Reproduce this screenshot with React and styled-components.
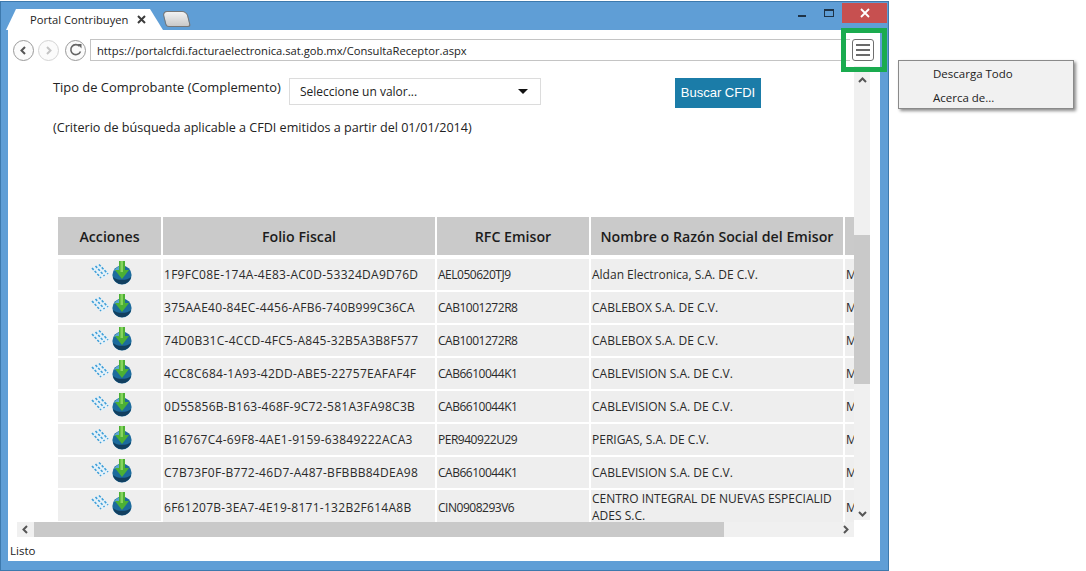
import React from "react";
import styled, { createGlobalStyle } from "styled-components";

const rows = [
  ["1F9FC08E-174A-4E83-AC0D-53324DA9D76D", "AEL050620TJ9", "Aldan Electronica, S.A. DE C.V."],
  ["375AAE40-84EC-4456-AFB6-740B999C36CA", "CAB1001272R8", "CABLEBOX S.A. DE C.V."],
  ["74D0B31C-4CCD-4FC5-A845-32B5A3B8F577", "CAB1001272R8", "CABLEBOX S.A. DE C.V."],
  ["4CC8C684-1A93-42DD-ABE5-22757EAFAF4F", "CAB6610044K1", "CABLEVISION S.A. DE C.V."],
  ["0D55856B-B163-468F-9C72-581A3FA98C3B", "CAB6610044K1", "CABLEVISION S.A. DE C.V."],
  ["B16767C4-69F8-4AE1-9159-63849222ACA3", "PER940922U29", "PERIGAS, S.A. DE C.V."],
  ["C7B73F0F-B772-46D7-A487-BFBBB84DEA98", "CAB6610044K1", "CABLEVISION S.A. DE C.V."],
  ["6F61207B-3EA7-4E19-8171-132B2F614A8B", "CIN0908293V6", "CENTRO INTEGRAL DE NUEVAS ESPECIALIDADES S.C."],
];

const ViewGlyph = styled.svg`
  margin-bottom: 2px;
  flex-shrink: 0;
`;

const ViewIcon = () => (
  <ViewGlyph width="22" height="20" viewBox="0 0 22 20">
    <path d="M2 7 L9 2 L21 11 L14 17 Z" fill="#e6f1f8" />
    <g stroke="#3f9fd8" strokeWidth="1.6" strokeDasharray="2.5 1.5" fill="none">
      <path d="M3 6 L12 16" />
      <path d="M6.5 4 L15.5 14" />
      <path d="M10 2.5 L19 12" />
    </g>
  </ViewGlyph>
);

const DownloadIcon = () => (
  <svg width="22" height="26" viewBox="0 0 22 26">
    <circle cx="11" cy="15" r="9.6" fill="#1c6b9c" />
    <path d="M1.8 17 A9.5 9.5 0 0 0 20.2 17 A12 8 0 0 1 1.8 17 Z" fill="#123f5f" />
    <path d="M3 11 A9 9 0 0 1 8 6.2 L8 10 Z" fill="#5aa6d0" />
    <path d="M8 1 H14 V10 H18 L11 19 L4 10 H8 Z" fill="#4cb034" />
    <path d="M9.5 1 H12 V12 H9.5 Z" fill="#86d45e" />
  </svg>
);

const Chevron = ({ dir, color = "#555" }) => {
  const d = {
    up: "M2 7 L5.5 3.5 L9 7",
    down: "M2 4 L5.5 7.5 L9 4",
    left: "M7 2 L3.5 5.5 L7 9",
    right: "M4 2 L7.5 5.5 L4 9",
  }[dir];
  return (
    <svg width="11" height="11" viewBox="0 0 11 11">
      <path d={d} fill="none" stroke={color} strokeWidth="2" />
    </svg>
  );
};

export default function App() {
  return (
    <Screen>
      <GlobalStyle />
      <Window>
        <TitleBar>
          <Tab>
            <TabTitle>Portal Contribuyen</TabTitle>
            <TabClose width="9" height="9" viewBox="0 0 9 9">
              <path d="M1 1 L8 8 M8 1 L1 8" stroke="#3c3c3c" strokeWidth="2" />
            </TabClose>
          </Tab>
          <NewTab />
          <WindowControls>
            <Minimize />
            <Maximize />
            <CloseButton>
              <svg width="10" height="10" viewBox="0 0 10 10">
                <path d="M1 1 L9 9 M9 1 L1 9" stroke="#fff" strokeWidth="1.8" />
              </svg>
            </CloseButton>
          </WindowControls>
        </TitleBar>
        <Client>
          <Toolbar>
            <NavButton>
              <Chevron dir="left" />
            </NavButton>
            <NavButton disabled>
              <Chevron dir="right" color="#c4c4c4" />
            </NavButton>
            <ReloadButton>
              <svg width="14" height="14" viewBox="0 0 14 14">
                <path d="M11.5 8.5 A5 5 0 1 1 10.5 3.2" fill="none" stroke="#666" strokeWidth="1.6" />
                <path d="M8.5 1 L12.5 1 L12.5 5.5 Z" fill="#666" />
              </svg>
            </ReloadButton>
            <Address>https://portalcfdi.facturaelectronica.sat.gob.mx/ConsultaReceptor.aspx</Address>
            <MenuButton>
              <MenuLine />
              <MenuLine />
              <MenuLine />
            </MenuButton>
          </Toolbar>
          <Body>
            <PageColumn>
              <Page>
                <FormRow>
                  <FormLabel>Tipo de Comprobante (Complemento)</FormLabel>
                  <Select>
                    Seleccione un valor...
                    <Caret />
                  </Select>
                  <SearchButton>Buscar CFDI</SearchButton>
                </FormRow>
                <Note>(Criterio de búsqueda aplicable a CFDI emitidos a partir del 01/01/2014)</Note>
                <Table>
                  <HeadRow>
                    <HeadCell>Acciones</HeadCell>
                    <HeadCell>Folio Fiscal</HeadCell>
                    <HeadCell>RFC Emisor</HeadCell>
                    <HeadCell>Nombre o Razón Social del Emisor</HeadCell>
                    <HeadCell />
                  </HeadRow>
                  {rows.map((item, key) => (
                    <Row key={key}>
                      <ActionCell>
                        <ViewIcon />
                        <DownloadIcon />
                      </ActionCell>
                      <FolioCell>{item[0]}</FolioCell>
                      <RfcCell>{item[1]}</RfcCell>
                      <Cell>{item[2]}</Cell>
                      <Cell>M</Cell>
                    </Row>
                  ))}
                </Table>
              </Page>
              <HScroll>
                <ScrollEnd>
                  <Chevron dir="left" />
                </ScrollEnd>
                <HThumb />
                <ScrollEnd>
                  <Chevron dir="right" />
                </ScrollEnd>
              </HScroll>
            </PageColumn>
            <VScroll>
              <VArrow>
                <Chevron dir="up" />
              </VArrow>
              <VThumb />
              <VArrow>
                <Chevron dir="down" />
              </VArrow>
            </VScroll>
          </Body>
          <Status>Listo</Status>
        </Client>
        <Highlight />
      </Window>
      <PopupMenu>
        <PopupItem>Descarga Todo</PopupItem>
        <PopupItem>Acerca de...</PopupItem>
      </PopupMenu>
    </Screen>
  );
}

const GlobalStyle = createGlobalStyle`
  html, body {
    margin: 0;
    padding: 0;
    background: #fff;
  }
  body {
    font-family: "Open Sans", "Liberation Sans", sans-serif;
    color: #222;
    overflow: hidden;
  }
`;

const Screen = styled.div`
  position: relative;
  width: 1086px;
  height: 571px;
  padding-top: 1px;
  box-sizing: border-box;
  overflow: hidden;
`;

const Window = styled.div`
  position: relative;
  width: 889px;
  height: 570px;
  box-sizing: border-box;
  background: #5f9ed6;
  border: 1px solid #3d79ad;
  display: flex;
  flex-direction: column;
`;

const TitleBar = styled.div`
  height: 28px;
  flex-shrink: 0;
  display: flex;
  align-items: flex-end;
  padding-left: 5px;
`;

const Tab = styled.div`
  width: 157px;
  height: 21px;
  box-sizing: border-box;
  padding: 0 0 1px 24px;
  background: #fff;
  clip-path: polygon(0 100%, 10px 0, 144px 0, 157px 100%);
  display: flex;
  align-items: center;
  font-size: 11.2px;
  color: #222;
`;

const TabTitle = styled.span`
  white-space: nowrap;
`;

const TabClose = styled.svg`
  margin-left: 9px;
  flex-shrink: 0;
`;

const NewTab = styled.div`
  width: 23px;
  height: 14px;
  margin: 0 0 3px 1px;
  background: linear-gradient(#f2f2f2, #c9c9c9);
  border: 1px solid #777;
  border-radius: 5px 5px 3px 3px;
  transform: skewX(14deg);
`;

const WindowControls = styled.div`
  margin-left: auto;
  align-self: flex-start;
  margin-right: 1px;
  display: flex;
  align-items: flex-start;
`;

const Minimize = styled.div`
  width: 8px;
  height: 2px;
  margin: 13px 18px 0 0;
  background: #1e3347;
`;

const Maximize = styled.div`
  width: 8px;
  height: 5px;
  margin: 7px 8px 0 0;
  border: 1px solid #1e3347;
  border-top-width: 2px;
`;

const CloseButton = styled.div`
  width: 45px;
  height: 20px;
  margin-top: 1px;
  background: #c75050;
  display: flex;
  align-items: center;
  justify-content: center;
`;

const Client = styled.div`
  flex: 1;
  margin: 0 8px 9px 7px;
  background: #fff;
  display: flex;
  flex-direction: column;
  min-height: 0;
`;

const Toolbar = styled.div`
  height: 36px;
  flex-shrink: 0;
  display: flex;
  align-items: center;
  padding: 4px 0 0 5px;
  box-sizing: border-box;
  gap: 4px;
`;

const NavButton = styled.div`
  width: 21px;
  height: 21px;
  box-sizing: border-box;
  border-radius: 50%;
  border: 1px solid ${(props) => (props.disabled ? "#d4d4d4" : "#9a9a9a")};
  background: #fbfbfb;
  display: flex;
  align-items: center;
  justify-content: center;
`;

const ReloadButton = styled(NavButton)`
  margin-left: 2px;
`;

const Address = styled.div`
  width: 760px;
  height: 22px;
  box-sizing: border-box;
  padding-left: 6px;
  border: 1px solid #c4c4c4;
  border-right: 0;
  font-size: 11.2px;
  line-height: 21px;
  color: #222;
  white-space: nowrap;
`;

const MenuButton = styled.div`
  width: 22px;
  height: 22px;
  box-sizing: border-box;
  margin-left: -2px;
  border: 1px solid #6f6f6f;
  border-radius: 3px;
  background: #fff;
  display: flex;
  flex-direction: column;
  justify-content: center;
  align-items: center;
  gap: 3px;
  position: relative;
  z-index: 2;
`;

const MenuLine = styled.span`
  width: 14px;
  height: 2px;
  background: #6a6a6a;
`;

const Body = styled.div`
  flex: 1;
  display: flex;
  min-height: 0;
  padding-left: 2px;
`;

const PageColumn = styled.div`
  width: 844px;
  flex-shrink: 0;
  display: flex;
  flex-direction: column;
`;

const Page = styled.div`
  height: 456px;
  overflow: hidden;
  padding: 12px 0 0 43px;
  box-sizing: border-box;
`;

const FormRow = styled.div`
  display: flex;
  align-items: flex-start;
  height: 30px;
`;

const FormLabel = styled.div`
  width: 236px;
  flex-shrink: 0;
  font-size: 12.9px;
  line-height: 18px;
  white-space: nowrap;
`;

const Select = styled.div`
  width: 252px;
  height: 27px;
  flex-shrink: 0;
  box-sizing: border-box;
  padding: 0 12px 0 10px;
  border: 1px solid #dcdcdc;
  font-size: 12px;
  display: flex;
  align-items: center;
  justify-content: space-between;
`;

const Caret = styled.span`
  width: 0;
  height: 0;
  border-left: 5px solid transparent;
  border-right: 5px solid transparent;
  border-top: 5px solid #111;
`;

const SearchButton = styled.div`
  width: 86px;
  height: 30px;
  flex-shrink: 0;
  margin-left: 134px;
  padding-bottom: 2px;
  box-sizing: border-box;
  background: #1b7ca8;
  color: #fff;
  font-family: "Liberation Sans", Arial, sans-serif;
  font-size: 13px;
  display: flex;
  align-items: center;
  justify-content: center;
`;

const Note = styled.div`
  margin-top: 11px;
  font-size: 12.6px;
  line-height: 18px;
  white-space: nowrap;
`;

const Table = styled.div`
  margin: 80px 0 0 5px;
  width: 900px;
`;

const columns = "103px 272px 152px 252px 100px";

const HeadRow = styled.div`
  display: grid;
  grid-template-columns: ${columns};
  column-gap: 2px;
  height: 38px;
  margin-bottom: 4px;
`;

const HeadCell = styled.div`
  background: #cacaca;
  font-size: 14.2px;
  font-weight: 600;
  color: #1c1c1c;
  display: flex;
  align-items: center;
  justify-content: center;
  white-space: nowrap;
`;

const Row = styled.div`
  display: grid;
  grid-template-columns: ${columns};
  column-gap: 2px;
  min-height: 31px;
  margin-bottom: 2px;
`;

const Cell = styled.div`
  background: #eeeeee;
  font-size: 12px;
  line-height: 17px;
  padding: 0 7px 1px 1px;
  color: #2a2a2a;
  display: flex;
  align-items: center;
  word-break: break-all;
`;

const FolioCell = styled(Cell)`
  letter-spacing: 0.28px;
  white-space: nowrap;
`;

const RfcCell = styled(Cell)`
  letter-spacing: -0.48px;
  white-space: nowrap;
`;

const ActionCell = styled.div`
  background: #eeeeee;
  display: flex;
  align-items: center;
  justify-content: center;
  box-sizing: border-box;
  padding: 0 0 4px 3px;
  height: 31px;
`;

const HScroll = styled.div`
  height: 15px;
  margin-left: 7px;
  background: #f0f0f0;
  display: flex;
  align-items: center;
`;

const ScrollEnd = styled.div`
  width: 17px;
  flex-shrink: 0;
  display: flex;
  justify-content: center;
`;

const HThumb = styled.div`
  width: 690px;
  height: 15px;
  background: #c9c9c9;
  margin-right: auto;
`;

const VScroll = styled.div`
  width: 16px;
  height: 454px;
  flex-shrink: 0;
  background: #f0f0f0;
  display: flex;
  flex-direction: column;
  align-items: center;
`;

const VArrow = styled.div`
  height: 11px;
  display: flex;
  margin-top: 9px;
  &:last-child {
    margin-top: 124px;
  }
`;

const VThumb = styled.div`
  width: 16px;
  height: 149px;
  margin-top: 149px;
  background: #c9c9c9;
`;

const Status = styled.div`
  height: 23px;
  flex-shrink: 0;
  padding: 3px 0 0 2px;
  box-sizing: border-box;
  font-size: 11.5px;
  line-height: 20px;
  color: #222;
`;

const Highlight = styled.div`
  position: absolute;
  left: 840px;
  top: 26px;
  width: 46px;
  height: 44px;
  box-sizing: border-box;
  border: 5px solid #1aab4f;
  pointer-events: none;
  z-index: 3;
`;

const PopupMenu = styled.div`
  position: absolute;
  left: 898px;
  top: 60px;
  width: 176px;
  height: 49px;
  box-sizing: border-box;
  background: #f1f1f1;
  border: 1px solid #8a8a8a;
  box-shadow: 2px 2px 3px rgba(0, 0, 0, 0.45);
  display: flex;
  flex-direction: column;
  padding-top: 1px;
`;

const PopupItem = styled.div`
  height: 24px;
  padding-left: 34px;
  font-size: 11.5px;
  line-height: 24px;
  color: #222;
`;
